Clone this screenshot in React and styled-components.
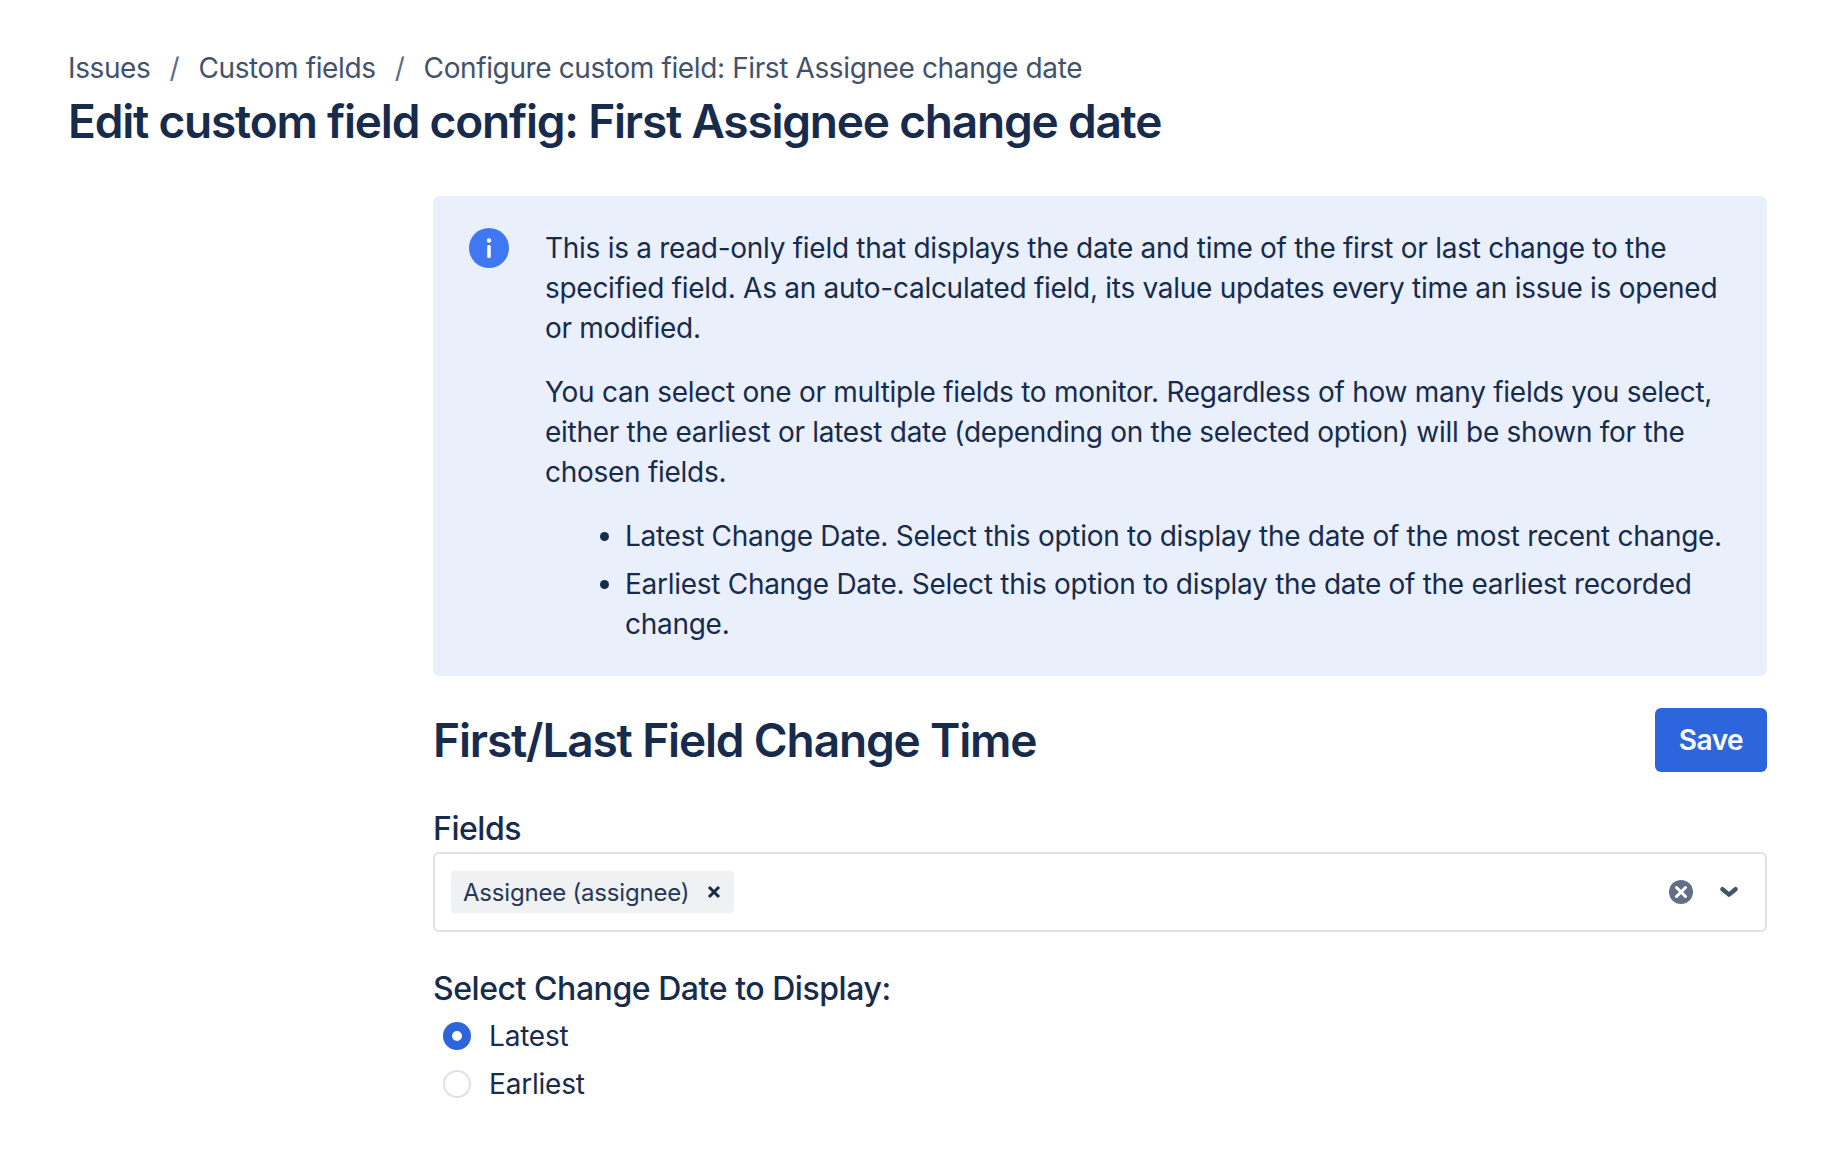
import styled, { createGlobalStyle } from "styled-components";

const GlobalStyle = createGlobalStyle`
  html, body {
    margin: 0;
    background: #fff;
    color: #172b4d;
    font-family: Inter, "Noto Sans", sans-serif;
  }
`;

const Page = styled.div`
  box-sizing: border-box;
  width: 1830px;
  height: 1158px;
  padding: 48px 63px 0 68px;
  overflow: hidden;
`;

const Crumbs = styled.nav`
  display: flex;
  height: 40px;
  align-items: center;
  font-size: 28px;
  line-height: 40px;
  letter-spacing: -0.38px;
  color: #42526e;
`;

const Slash = styled.span`
  width: 48px;
  text-align: center;
  color: #5e6c84;
`;

const Title = styled.h1`
  margin: 5px 0 0;
  font-size: 46px;
  line-height: 56px;
  font-weight: 600;
  letter-spacing: -1.2px;
  color: #172b4d;
`;

const Content = styled.main`
  margin: 47px 0 0 365px;
`;

const Notice = styled.section`
  display: flex;
  box-sizing: border-box;
  height: 480px;
  padding: 32px 40px 32px 36px;
  gap: 36px;
  background: #e9f0fc;
  border-radius: 6px;
`;

const NoticeIcon = styled.svg`
  flex: none;
  width: 40px;
  height: 40px;
  margin-top: 0;
`;

const NoticeBody = styled.div`
  font-size: 28px;
  line-height: 40px;
  letter-spacing: -0.28px;
  color: #172b4d;
`;

const Para = styled.p`
  margin: 0 0 24px;
`;

const Points = styled.ul`
  margin: 0;
  padding: 0 0 0 80px;
`;

const Point = styled.li`
  margin-top: 8px;
`;

const FormHead = styled.div`
  display: flex;
  justify-content: space-between;
  align-items: center;
  margin-top: 32px;
`;

const Heading = styled.h2`
  margin: 0;
  font-size: 46px;
  line-height: 64px;
  font-weight: 600;
  letter-spacing: -1.15px;
`;

const SaveButton = styled.button`
  width: 112px;
  height: 64px;
  padding: 0;
  border: 0;
  border-radius: 6px;
  background: #2d65dd;
  color: #fff;
  font: 600 28px/40px Inter, sans-serif;
  letter-spacing: -0.5px;
`;

const Label = styled.div`
  font-size: 32px;
  line-height: 40px;
  font-weight: 500;
  letter-spacing: -0.45px;
  color: #172b4d;
`;

const FieldsLabel = styled(Label)`
  margin-top: 37px;
`;

const DateLabel = styled(Label)`
  margin-top: 37px;
`;

const SelectBox = styled.div`
  display: flex;
  align-items: center;
  box-sizing: border-box;
  height: 80px;
  margin-top: 3px;
  padding: 0 27px 0 16px;
  border: 2px solid #dfe1e6;
  border-radius: 6px;
`;

const Tag = styled.span`
  display: flex;
  align-items: center;
  height: 42px;
  padding: 0 13px 0 12px;
  gap: 18px;
  background: #f0f1f3;
  border-radius: 4px;
  font-size: 24px;
  letter-spacing: -0.2px;
  color: #253858;
`;

const Spacer = styled.div`
  flex: 1;
`;

const Glyph = styled.svg`
  flex: none;
  display: block;
`;

const ClearGlyph = styled(Glyph)`
  margin-right: 27px;
`;

const RadioGroup = styled.div`
  display: flex;
  flex-direction: column;
  gap: 8px;
  margin-top: 7px;
  padding-left: 10px;
`;

const RadioRow = styled.label`
  display: flex;
  align-items: center;
  gap: 18px;
  font-size: 28px;
  line-height: 40px;
  letter-spacing: -0.2px;
`;

const RadioDot = styled.span`
  box-sizing: border-box;
  width: 28px;
  height: 28px;
  border-radius: 50%;
  background: #fff;
  border: ${(p) => (p.$on ? "9px solid #2d65dd" : "2px solid #dfe1e6")};
`;

export default function App() {
  return (
    <>
      <GlobalStyle />
      <Page>
        <Crumbs>
          <span>Issues</span>
          <Slash>/</Slash>
          <span>Custom fields</span>
          <Slash>/</Slash>
          <span>Configure custom field: First Assignee change date</span>
        </Crumbs>
        <Title>Edit custom field config: First Assignee change date</Title>

        <Content>
          <Notice>
            <NoticeIcon viewBox="0 0 40 40">
              <circle cx="20" cy="20" r="20" fill="#3f78f2" />
              <rect x="18.2" y="17" width="3.6" height="13" rx="1.6" fill="#fff" />
              <circle cx="20" cy="12.5" r="2.2" fill="#fff" />
            </NoticeIcon>
            <NoticeBody>
              <Para>
                This is a read-only field that displays the date and time of the first or last change to the specified
                field. As an auto-calculated field, its value updates every time an issue is opened or modified.
              </Para>
              <Para>
                You can select one or multiple fields to monitor. Regardless of how many fields you select, either the
                earliest or latest date (depending on the selected option) will be shown for the chosen fields.
              </Para>
              <Points>
                <Point>Latest Change Date. Select this option to display the date of the most recent change.</Point>
                <Point>Earliest Change Date. Select this option to display the date of the earliest recorded change.</Point>
              </Points>
            </NoticeBody>
          </Notice>

          <FormHead>
            <Heading>First/Last Field Change Time</Heading>
            <SaveButton>Save</SaveButton>
          </FormHead>

          <FieldsLabel>Fields</FieldsLabel>
          <SelectBox>
            <Tag>
              Assignee (assignee)
              <Glyph width="14" height="14" viewBox="0 0 14 14">
                <path d="M2 2l10 10M12 2L2 12" stroke="#172b4d" strokeWidth="3" />
              </Glyph>
            </Tag>
            <Spacer />
            <ClearGlyph width="24" height="24" viewBox="0 0 24 24">
              <circle cx="12" cy="12" r="12" fill="#626f86" />
              <path d="M7.5 7.5l9 9M16.5 7.5l-9 9" stroke="#fff" strokeWidth="3" strokeLinecap="round" />
            </ClearGlyph>
            <Glyph width="18" height="12" viewBox="0 0 18 12">
              <path d="M2.5 3.2L9 8.6 15.5 3.2" fill="none" stroke="#44546f" strokeWidth="4.4" strokeLinecap="round" strokeLinejoin="round" />
            </Glyph>
          </SelectBox>

          <DateLabel>Select Change Date to Display:</DateLabel>
          <RadioGroup>
            <RadioRow>
              <RadioDot $on />
              Latest
            </RadioRow>
            <RadioRow>
              <RadioDot />
              Earliest
            </RadioRow>
          </RadioGroup>
        </Content>
      </Page>
    </>
  );
}
